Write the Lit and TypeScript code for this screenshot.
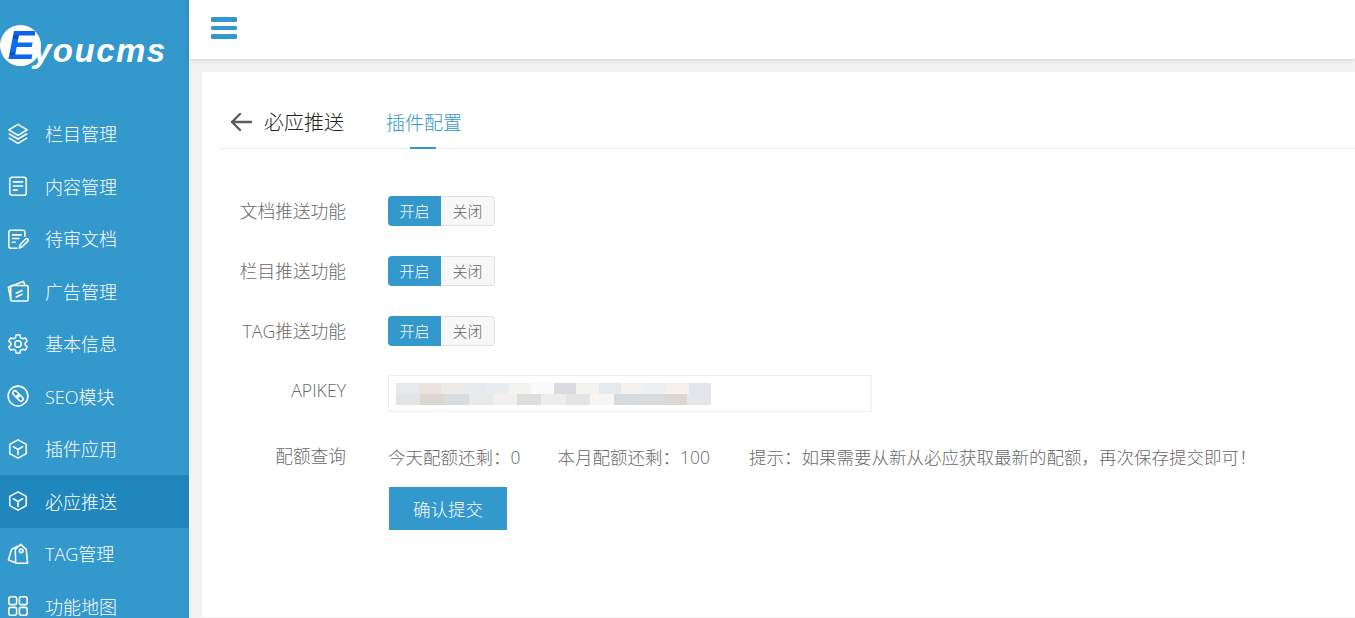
import { LitElement, html, css, svg } from "lit";
import { customElement } from "lit/decorators.js";

const s = (c: unknown) => html`<svg class="ic" viewBox="0 0 24 24" fill="none" stroke="currentColor" stroke-width="1.7" stroke-linecap="round" stroke-linejoin="round">${c}</svg>`;
const cube = svg`<path d="M12 2 21 7v10l-9 5-9-5V7z"/><path d="M7 9.500l5 3 5-3M12 12.500V18"/>`;
const icons = {
  layers: svg`<path d="M12 1.500 22 7.500l-10 6-10-6z"/><path d="M2.500 12 12 17.500l9.500-5.500"/><path d="M2.500 16.500 12 22.300l9.500-5.800"/>`,
  doc: svg`<rect x="3" y="2.500" width="18" height="19.500" rx="2.500"/><path d="M7 7.500h10M7 12h10M7 16.500h4"/>`,
  edit: svg`<path d="M19.500 9V4.500a2 2 0 0 0-2-2H4a2 2 0 0 0-2 2V20a2 2 0 0 0 2 2h7"/><path d="M6 7.500h9.500M6 11.500h7M6 15.500h3"/><path d="M13.500 21.800l.7-3.600 6.200-6.200a1.600 1.600 0 0 1 2.300 2.300l-6.200 6.200z"/>`,
  ad: svg`<rect x="4" y="6" width="19" height="17" rx="1.500"/><path d="M4 20 1.500 8 18 1.500 19.500 6"/><path d="M10 14.500l6.500-3M10 18.500l6.500-3"/>`,
  gear: svg`<circle cx="12" cy="12" r="3.500"/><path d="M10 2h4l.7 3 2.300 1.300 3-.9 2 3.500-2.200 2.100v2l2.200 2.100-2 3.500-3-.9L14.700 19 14 22h-4l-.7-3L7 17.700l-3 .9-2-3.500L4.200 13v-2L2 8.900l2-3.500 3 .9L9.300 5z"/>`,
  link: svg`<circle cx="12" cy="12" r="10.800"/><g transform="rotate(45 12 12)"><rect x="5" y="9.600" width="8" height="4.800" rx="2.400"/><rect x="11" y="9.600" width="8" height="4.800" rx="2.400"/></g>`,
  cube,
  tag: svg`<path d="M15 1.500 21 7l1.500 15H9.500L9 7z"/><circle cx="15.500" cy="8.500" r="2"/><path d="M11.500 3.500 5 7 1.500 18.500 8 21"/>`,
  grid: svg`<rect x="2" y="2" width="8.500" height="8.500" rx="2"/><rect x="13.500" y="2" width="8.500" height="8.500" rx="2"/><rect x="2" y="13.500" width="8.500" height="8.500" rx="2"/><rect x="13.500" y="13.500" width="8.500" height="8.500" rx="2"/>`,
};

const menu: [keyof typeof icons, string, boolean?][] = [
  ["layers", "栏目管理"],
  ["doc", "内容管理"],
  ["edit", "待审文档"],
  ["ad", "广告管理"],
  ["gear", "基本信息"],
  ["link", "SEO模块"],
  ["cube", "插件应用"],
  ["cube", "必应推送", true],
  ["tag", "TAG管理"],
  ["grid", "功能地图"],
];

const mosaicTop = ["#e6e8ea","#e9e2dd","#eeeae8","#e8ebee","#e9edf0","#f3f3f1","#fafafa","#d9dbde","#f5f3ef","#e4e9ee","#f3f2ef","#eef1f4","#f6f1ea","#e3e6ea"];
const mosaicBottom = ["#e2e4e6","#dcd6d1","#d8dde1","#e8eaea","#f1f0ee","#dedfdc","#efedea","#e2e4e6","#f7f6f3","#d5dbe0","#d9dbdd","#dcd7d2","#e4e6e9"];

@customElement("app-root")
export class AppRoot extends LitElement {
  static styles = css`
    :host {
      display: flex;
      height: 618px;
      width: 1355px;
      overflow: hidden;
      background: #f3f3f3;
      font-family: "Open Sans", "Noto Sans CJK SC", "Liberation Sans", sans-serif;
      font-weight: 300;
    }
    .side {
      width: 189px;
      flex: none;
      background: #3398cc;
      color: #fff;
      overflow: hidden;
    }
    .logo {
      display: flex;
      align-items: center;
      height: 107.500px;
      padding-bottom: 17px;
      box-sizing: border-box;
    }
    .logo-badge {
      width: 41px;
      height: 41px;
      flex: none;
      border-radius: 50%;
      background: #fff;
      display: flex;
      align-items: center;
      justify-content: center;
    }
    .logo-badge span {
      margin-left: 2px;
      font: italic 700 41px/1 "Liberation Sans", sans-serif;
      color: transparent;
      background: linear-gradient(#0a63f0 0 24%, #0b4fb8 24% 34%, #0a6cf5 34% 66%, #0b4fb8 66% 72%, #0a66f2 72%);
      -webkit-background-clip: text;
      background-clip: text;
    }
    .logo-text {
      margin-left: -8px;
      margin-top: 10px;
      font: italic 700 33px/1 "Liberation Sans", sans-serif;
      letter-spacing: 1.500px;
      color: #fff;
    }
    .nav { display: flex; flex-direction: column; }
    .item {
      height: 52.500px;
      flex: none;
      display: flex;
      align-items: center;
      gap: 16px;
      padding-left: 7px;
      font-size: 18px;
    }
    .item span { padding-bottom: 1px; }
    .item.on { background: #2087bd; }
    .ic { width: 22px; height: 22px; flex: none; }
    .main { flex: 1; min-width: 0; display: flex; flex-direction: column; }
    .top {
      height: 59px;
      flex: none;
      background: #fff;
      box-shadow: 0 1px 5px rgba(0,0,0,.14);
      display: flex;
      align-items: center;
      padding: 0 0 3px 22px;
      box-sizing: border-box;
    }
    .burger { display: flex; flex-direction: column; gap: 4px; width: 26px; }
    .burger i { display: block; height: 4.700px; border-radius: 1px; background: #3398cc; }
    .card {
      flex: 1;
      margin: 13px 0 1px 13px;
      background: #fff;
      padding: 0 0 0 18px;
    }
    .tabs {
      height: 77px;
      box-sizing: border-box;
      border-bottom: 1px solid #ececec;
      display: flex;
      align-items: flex-end;
      padding-bottom: 12px;
      font-size: 20px;
      color: #222;
    }
    .tabs svg { width: 24px; height: 24px; color: #5c5c5c; margin-left: 9px; margin-right: 11px; margin-bottom: 2px; flex: none; }
    .tab-active { color: #3398cc; font-size: 19px; margin-left: 42px; position: relative; }
    .tab-active::after {
      content: "";
      position: absolute;
      left: 24px;
      bottom: -13px;
      width: 26px;
      height: 2px;
      background: #3398cc;
    }
    .form { padding-top: 32px; }
    .row { display: flex; align-items: center; height: 60px; font-size: 18px; color: #686868; }
    .row.toggle { align-items: flex-start; padding-top: 15px; box-sizing: border-box; }
    .label { width: 126px; text-align: right; flex: none; margin-right: 42px; line-height: 30px; font-size: 17.700px; }
    .sw { display: flex; height: 30px; width: 107px; font-size: 15px; }
    .sw b, .sw em { flex: 1; display: flex; align-items: center; justify-content: center; font-style: normal; font-weight: 300; padding-bottom: 2px; box-sizing: border-box; }
    .sw b { background: #3398cc; color: #fff; border-radius: 4px 0 0 4px; flex: 0 0 53px; }
    .sw em { background: #f7f7f7; border: 1px solid #e2e2e2; border-left: 0; border-radius: 0 4px 4px 0; color: #666; }
    .key-row { height: 72px; align-items: flex-start; padding-top: 14px; box-sizing: border-box; }
    .input {
      width: 484px;
      height: 37px;
      box-sizing: border-box;
      border: 1px solid #efefef;
      padding: 7px 8px 0 7px;
    }
    .blur { width: 315px; display: flex; flex-direction: column; filter: blur(.6px); }
    .blur div { display: flex; height: 11px; }
    .blur span { flex: 1; }
    .info { display: flex; gap: 37px; font-size: 17.500px; align-items: center; }
    .hint { margin-left: 2px; }
    .quota { height: 46px; }
    .submit {
      width: 118px;
      height: 43px;
      margin: 8px 0 0 169px;
      background: #3398cc;
      color: #fff;
      font-size: 17.500px;
      display: flex;
      align-items: center;
      justify-content: center;
    }
  `;

  private toggle(label: string) {
    return html`<div class="row toggle"><div class="label">${label}</div><div class="sw"><b>开启</b><em>关闭</em></div></div>`;
  }

  render() {
    return html`
      <aside class="side">
        <div class="logo"><div class="logo-badge"><span>E</span></div><div class="logo-text">youcms</div></div>
        <nav class="nav">
          ${menu.map(([i, t, on]) => html`<div class="item ${on ? "on" : ""}">${s(icons[i])}<span>${t}</span></div>`)}
        </nav>
      </aside>
      <div class="main">
        <header class="top"><div class="burger"><i></i><i></i><i></i></div></header>
        <section class="card">
          <div class="tabs">
            <svg viewBox="0 0 24 24" fill="none" stroke="currentColor" stroke-width="2.400" stroke-linecap="round" stroke-linejoin="round"><path d="M22 12H3M11 4l-8 8 8 8"/></svg>
            <span>必应推送</span>
            <span class="tab-active">插件配置</span>
          </div>
          <div class="form">
            ${this.toggle("文档推送功能")}
            ${this.toggle("栏目推送功能")}
            ${this.toggle("TAG推送功能")}
            <div class="row key-row">
              <div class="label">APIKEY</div>
              <div class="input"><div class="blur">
                <div>${mosaicTop.map((c) => html`<span style="background:${c}"></span>`)}</div>
                <div>${mosaicBottom.map((c) => html`<span style="background:${c}"></span>`)}</div>
              </div></div>
            </div>
            <div class="row quota">
              <div class="label">配额查询</div>
              <div class="info"><span>今天配额还剩：0</span><span>本月配额还剩：100</span><span class="hint">提示：如果需要从新从必应获取最新的配额，再次保存提交即可！</span></div>
            </div>
            <div class="submit">确认提交</div>
          </div>
        </section>
      </div>
    `;
  }
}
